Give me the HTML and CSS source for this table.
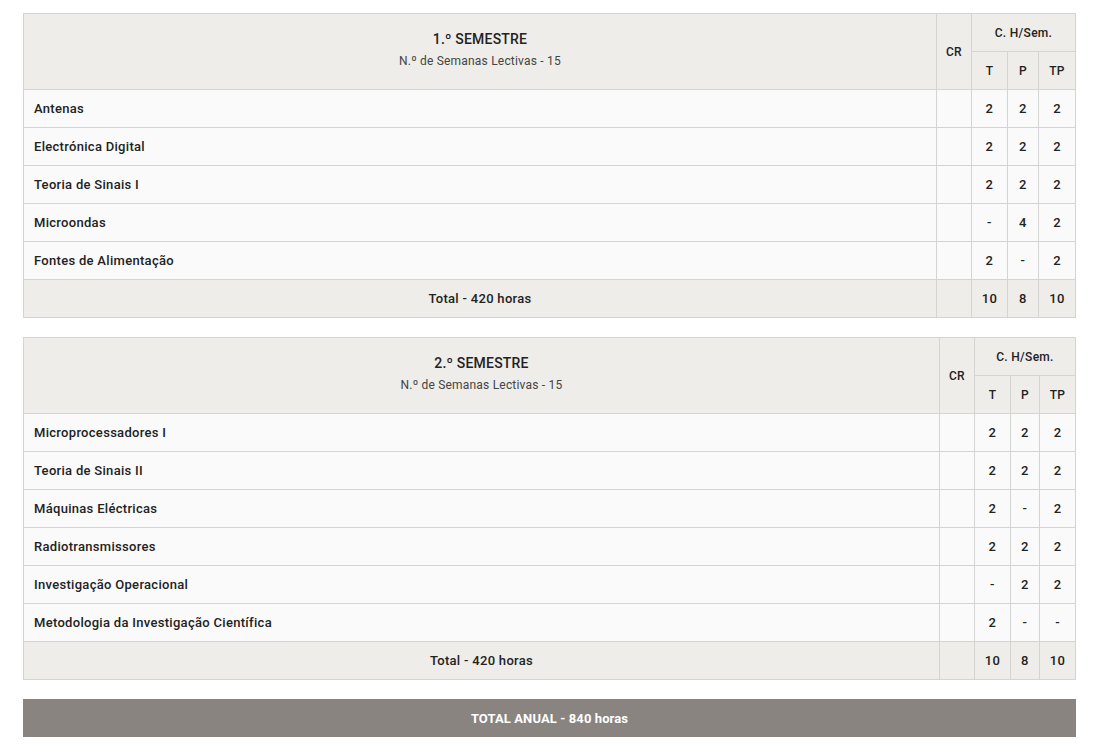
FILE: index.html
```html
<!DOCTYPE html>
<html lang="pt">
<head>
<meta charset="utf-8">
<title>Plano de estudos</title>
<link rel="stylesheet" href="styles.css">
</head>
<body>
<div class="page">
  <table class="plan plan-a">
    <colgroup>
      <col class="c-name"><col class="c-cr"><col class="c-t"><col class="c-p"><col class="c-tp">
    </colgroup>
    <thead>
      <tr>
        <th rowspan="2" class="sem"><div class="sem-title">1.º SEMESTRE</div><div class="sem-sub">N.º de Semanas Lectivas - 15</div></th>
        <th rowspan="2">CR</th>
        <th colspan="3">C. H/Sem.</th>
      </tr>
      <tr><th>T</th><th>P</th><th>TP</th></tr>
    </thead>
    <tbody>
      <tr><td class="name">Antenas</td><td></td><td>2</td><td>2</td><td>2</td></tr>
      <tr><td class="name">Electrónica Digital</td><td></td><td>2</td><td>2</td><td>2</td></tr>
      <tr><td class="name">Teoria de Sinais I</td><td></td><td>2</td><td>2</td><td>2</td></tr>
      <tr><td class="name">Microondas</td><td></td><td>-</td><td>4</td><td>2</td></tr>
      <tr><td class="name">Fontes de Alimentação</td><td></td><td>2</td><td>-</td><td>2</td></tr>
      <tr class="total"><td>Total - 420 horas</td><td></td><td>10</td><td>8</td><td>10</td></tr>
    </tbody>
  </table>

  <table class="plan plan-b">
    <colgroup>
      <col class="c-name"><col class="c-cr"><col class="c-t"><col class="c-p"><col class="c-tp">
    </colgroup>
    <thead>
      <tr>
        <th rowspan="2" class="sem"><div class="sem-title">2.º SEMESTRE</div><div class="sem-sub">N.º de Semanas Lectivas - 15</div></th>
        <th rowspan="2">CR</th>
        <th colspan="3">C. H/Sem.</th>
      </tr>
      <tr><th>T</th><th>P</th><th>TP</th></tr>
    </thead>
    <tbody>
      <tr><td class="name">Microprocessadores I</td><td></td><td>2</td><td>2</td><td>2</td></tr>
      <tr><td class="name">Teoria de Sinais II</td><td></td><td>2</td><td>2</td><td>2</td></tr>
      <tr><td class="name">Máquinas Eléctricas</td><td></td><td>2</td><td>-</td><td>2</td></tr>
      <tr><td class="name">Radiotransmissores</td><td></td><td>2</td><td>2</td><td>2</td></tr>
      <tr><td class="name">Investigação Operacional</td><td></td><td>-</td><td>2</td><td>2</td></tr>
      <tr><td class="name">Metodologia da Investigação Científica</td><td></td><td>2</td><td>-</td><td>-</td></tr>
      <tr class="total"><td>Total - 420 horas</td><td></td><td>10</td><td>8</td><td>10</td></tr>
    </tbody>
  </table>

  <div class="annual">TOTAL ANUAL - 840 horas</div>
</div>
</body>
</html>
```

FILE: styles.css
```css
html, body {
  margin: 0;
  padding: 0;
  background: #ffffff;
}
body {
  font-family: Roboto, "Liberation Sans", Arial, sans-serif;
  color: #222222;
}
.page {
  padding: 13px 23px 0 23px;
  display: flex;
  flex-direction: column;
  gap: 19px;
}
.plan {
  width: 100%;
  border-collapse: collapse;
  table-layout: fixed;
  font-size: 13px;
  font-weight: 500;
  letter-spacing: 0.3px;
}
.plan th, .plan td {
  border: 1px solid #d4d4d2;
  height: 38px;
  padding: 0;
  text-align: center;
  vertical-align: middle;
  box-sizing: border-box;
}
.plan th {
  background: #eeede9;
  font-weight: 500;
  font-size: 12px;
}
.plan td {
  background: #fafafa;
}
.plan-a .c-cr { width: 35px; }
.plan-a .c-t { width: 36px; }
.plan-a .c-p { width: 31px; }
.plan-a .c-tp { width: 37px; }
.plan-b .c-cr { width: 35px; }
.plan-b .c-t { width: 36px; }
.plan-b .c-p { width: 29px; }
.plan-b .c-tp { width: 36px; }
.plan td.name {
  text-align: left;
  padding-left: 10px;
}
.plan .sem {
  padding-bottom: 4px;
}
.sem-title {
  font-size: 14px;
  font-weight: 500;
  letter-spacing: 0.2px;
  line-height: 18px;
}
.sem-sub {
  font-size: 12px;
  font-weight: 400;
  color: #444;
  letter-spacing: 0.2px;
  margin-top: 5px;
  line-height: 16px;
}
.plan tr.total td {
  background: #eeede9;
}
.annual {
  height: 38px;
  background: #8a8480;
  color: #ffffff;
  font-size: 13px;
  font-weight: 700;
  display: flex;
  align-items: center;
  justify-content: center;
  letter-spacing: 0.1px;
}
```
